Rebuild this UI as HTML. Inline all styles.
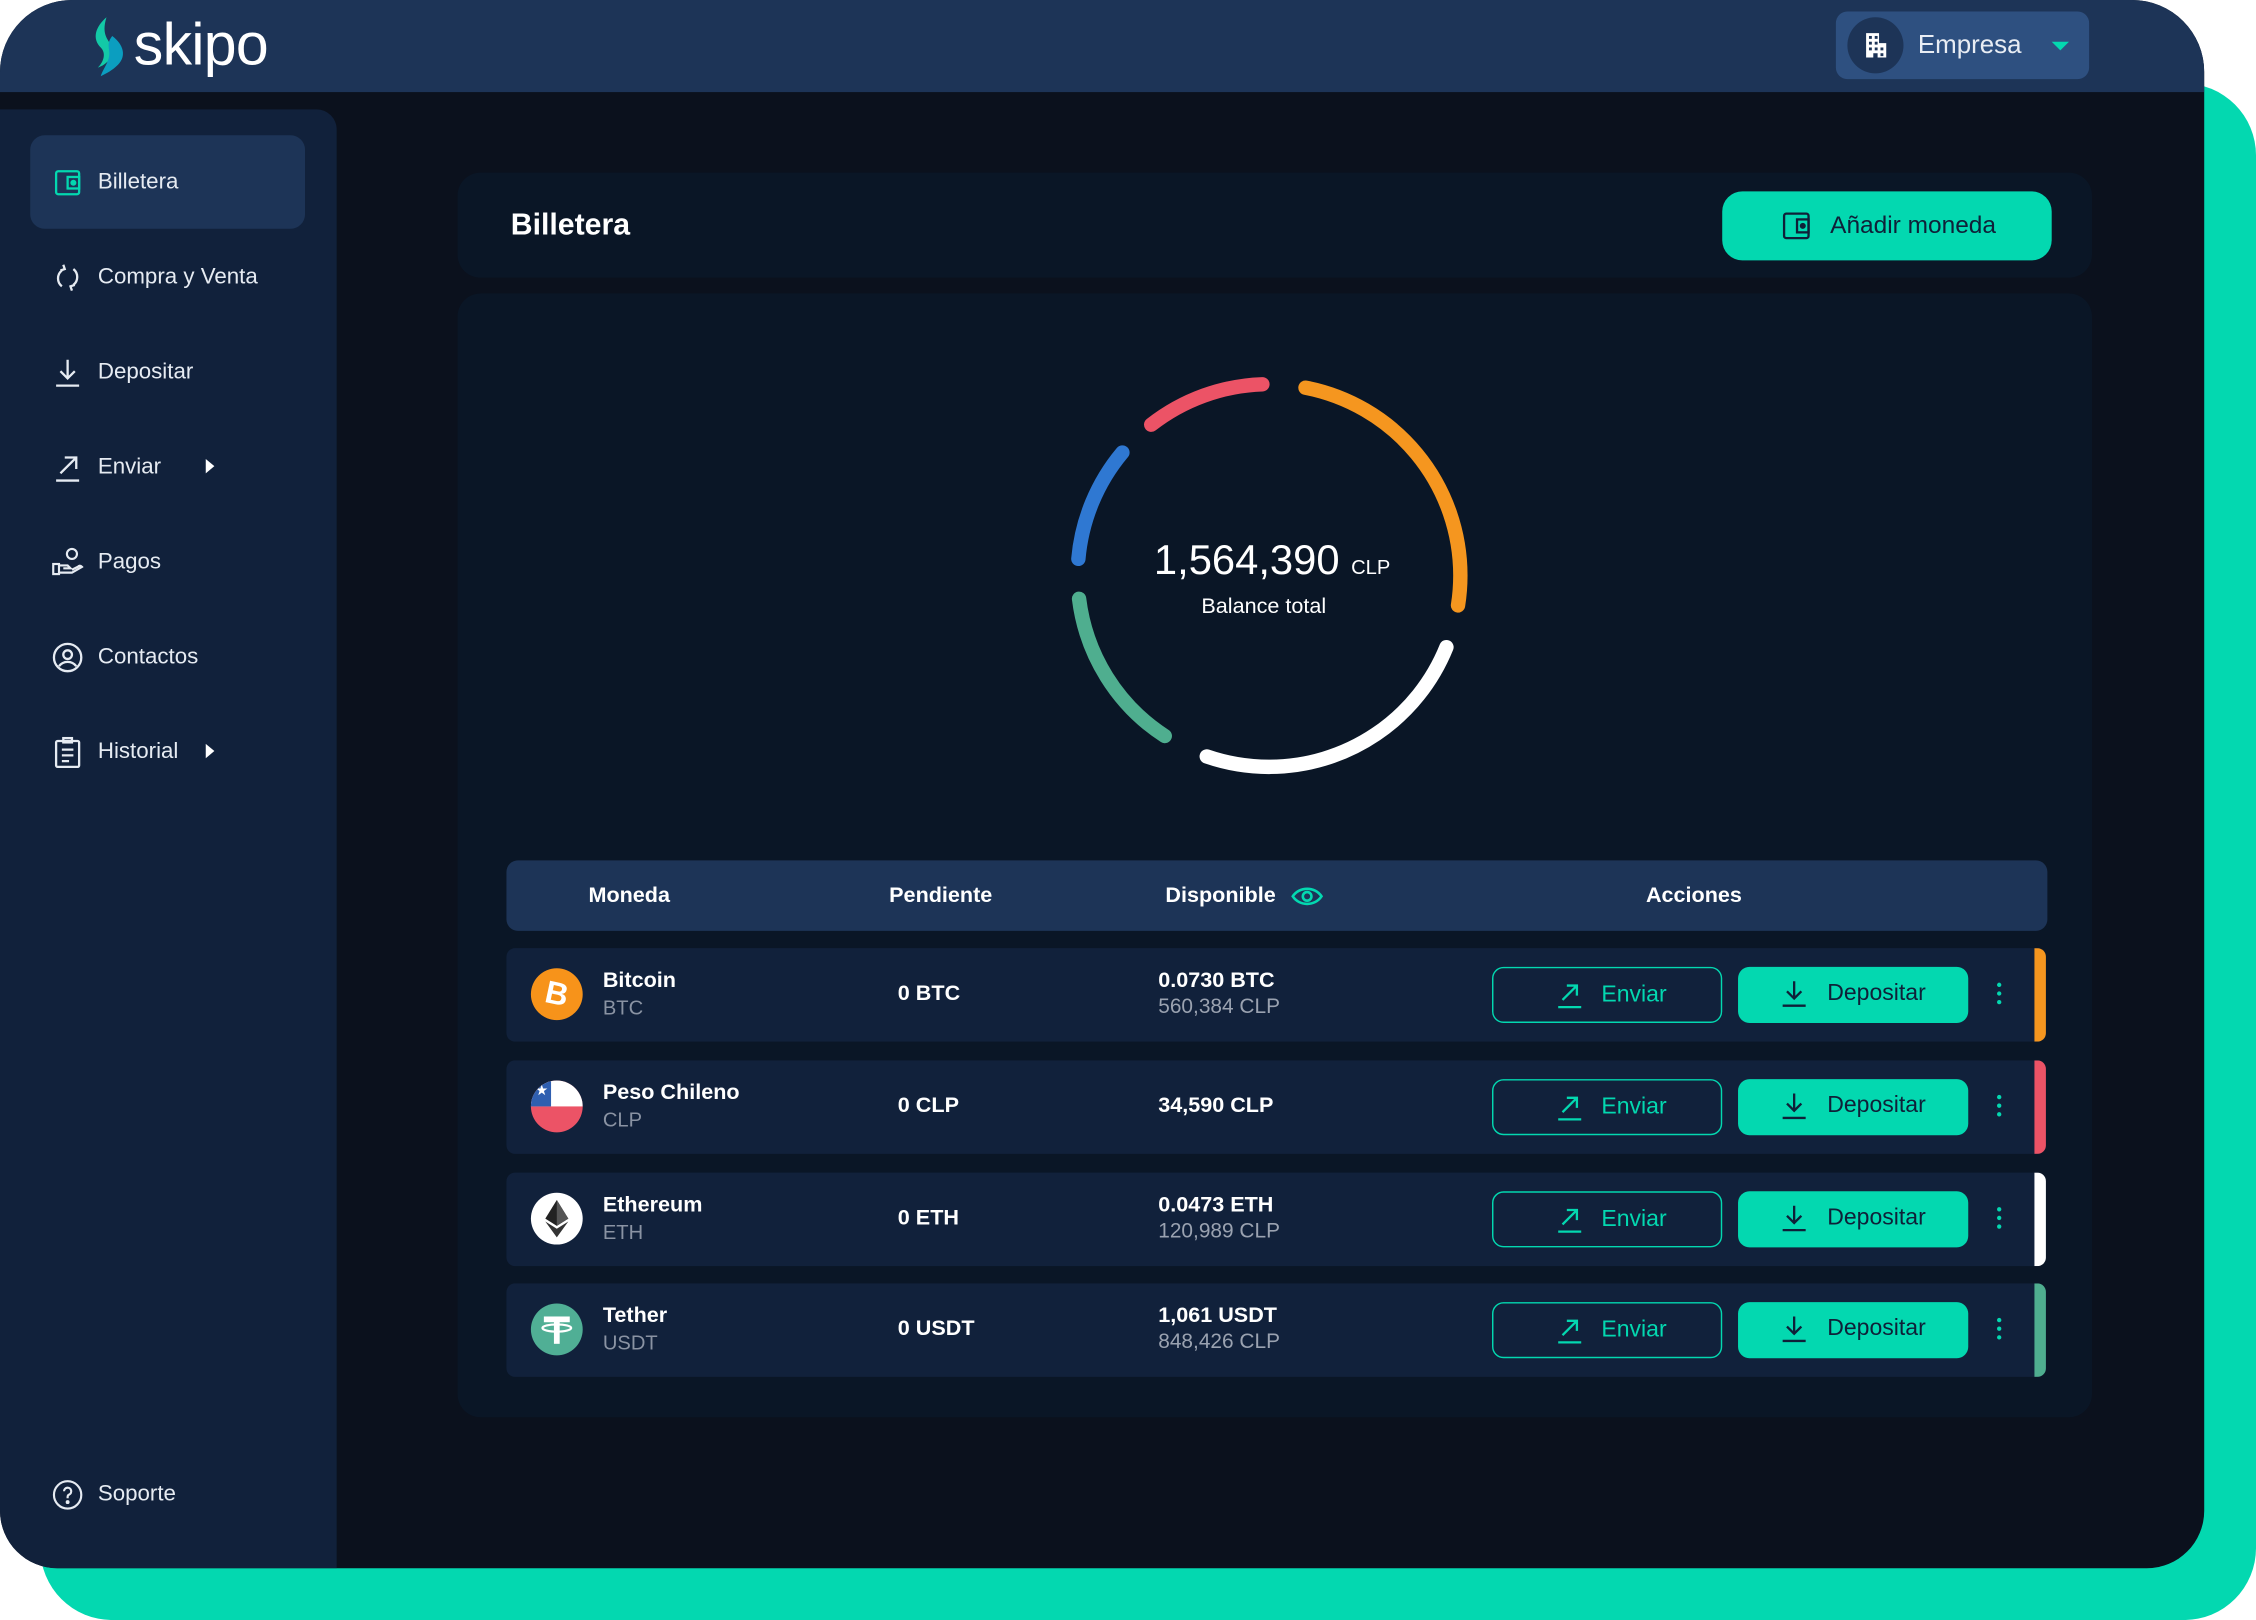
<!DOCTYPE html>
<html><head><meta charset="utf-8">
<style>
*{margin:0;padding:0;box-sizing:border-box}
html,body{width:2256px;height:1620px;overflow:hidden;background:#fff;font-family:"Liberation Sans",sans-serif}
#s{position:absolute;left:0;top:0;width:1568px;height:1126px;transform:scale(1.43878);transform-origin:0 0}
.a{position:absolute}
.green{left:28px;top:58px;width:1540px;height:1068px;background:#03d8b0;border-radius:50px}
.win{left:0;top:0;width:1532px;height:1090px;background:#0b111d;border-radius:50px 50px 40px 40px;overflow:hidden}
.hdr{left:0;top:0;width:1532px;height:64px;background:#1d3457}
.side{left:0;top:76px;width:234px;height:1014px;background:#11213b;border-radius:0 14px 0 0}
.item{position:absolute;left:21px;width:191px;height:65px;border-radius:10px;color:#e6ebf2;font-size:15.5px;display:flex;align-items:center}
.item svg{position:absolute;left:15px;top:50%;margin-top:-11px}
.item span{position:absolute;left:47px}
.card{background:#0a1626;border-radius:16px}
.th{position:absolute;top:598px;height:49px;color:#fff;font-weight:bold;font-size:15px;line-height:49px}
.row{position:absolute;left:352px;width:1070px;height:65px;background:#11213b;border-radius:6px;overflow:hidden}
.bar{position:absolute;right:0;top:0;width:8px;height:65px}
.name{position:absolute;left:67px;top:14px;color:#fff;font-weight:bold;font-size:15px}
.sub{position:absolute;left:67px;top:33px;color:#8a93a3;font-size:14px}
.pend{position:absolute;left:272px;top:23px;color:#fff;font-weight:bold;font-size:15px}
.d1{position:absolute;left:453px;color:#fff;font-weight:bold;font-size:15px}
.d2{position:absolute;left:453px;top:33px;color:#9aa2b0;font-size:14.5px}
.btn1{position:absolute;left:685px;top:13px;width:160px;height:39px;border:1.5px solid #03d8b0;border-radius:8px;color:#03d8b0;font-size:16px}
.btn2{position:absolute;left:856px;top:13px;width:160px;height:39px;background:#03d8b0;border-radius:8px;color:#0f2038;font-size:16px}
.btn1 span,.btn2 span{position:absolute;top:10px}
.btn1 svg,.btn2 svg{position:absolute;top:9px}
.dots{position:absolute;left:1036px;top:24px;width:4px}
.dots i{display:block;width:3px;height:3px;border-radius:2px;background:#03d8b0;margin-bottom:3px}
.ic{position:absolute;left:17px;top:14px;width:36px;height:36px;border-radius:50%;overflow:hidden}
</style></head><body>
<div id="s">
<div class="a green"></div>
<div class="a win">
 <div class="a hdr">
  <svg class="a" style="left:64px;top:11px" width="26" height="44" viewBox="0 0 26 44"><path d="M10 1 C2 8 0 16 6 22 C10 26 8 32 4 36 C10 34 16 28 14 22 C12 17 6 14 10 1Z" fill="#13c9a7"/><path d="M14 14 C22 20 24 28 18 34 C14 38 10 40 6 42 C8 36 12 32 12 26 C12 22 10 19 14 14Z" fill="#0b9ec0"/></svg>
  <div class="a" style="left:93px;top:8px;color:#fff;font-size:41px;letter-spacing:-0.5px">skipo</div>
  <div class="a" style="left:1276px;top:8px;width:176px;height:47px;background:#2e5080;border-radius:8px">
   <div class="a" style="left:8px;top:4px;width:39px;height:39px;border-radius:50%;background:#1d3457"></div>
   <svg class="a" style="left:18px;top:13px" width="20" height="20" viewBox="0 0 20 20" fill="#fff"><path d="M3 2h9v7h5v10H3z"/><g fill="#1d3457"><rect x="5" y="4" width="2" height="2"/><rect x="9" y="4" width="2" height="2"/><rect x="5" y="8" width="2" height="2"/><rect x="9" y="8" width="2" height="2"/><rect x="5" y="12" width="2" height="2"/><rect x="9" y="12" width="2" height="2"/><rect x="13" y="12" width="2" height="2"/><rect x="8" y="16" width="3" height="3"/><rect x="13" y="16" width="2" height="2"/></g></svg>
   <div class="a" style="left:57px;top:13px;color:#e8edf4;font-size:18px">Empresa</div>
   <div class="a" style="left:150px;top:21px;width:0;height:0;border-left:6px solid transparent;border-right:6px solid transparent;border-top:6px solid #03d8b0"></div>
  </div>
 </div>
 <div class="a side">
  <div class="item" style="top:18px;background:#1d3457"><svg width="22" height="22" viewBox="0 0 22 22" fill="none" stroke="#03d8b0" stroke-width="1.6"><rect x="3" y="3" width="16" height="16" rx="1.5"/><rect x="11" y="7" width="8" height="8"/><circle cx="15" cy="11" r="1.3" fill="#03d8b0"/></svg><span>Billetera</span></div>
  <div class="item" style="top:84px"><svg width="22" height="22" viewBox="0 0 22 22" fill="none" stroke="#e6ebf2" stroke-width="1.6"><path d="M7 6a7 7 0 0 0 0 11"/><path d="M15 16a7 7 0 0 0 0-11"/><path d="M8 2l1 3-3 1"/><path d="M14 20l-1-3 3-1"/></svg><span>Compra y Venta</span></div>
  <div class="item" style="top:150px"><svg width="22" height="22" viewBox="0 0 22 22" fill="none" stroke="#e6ebf2" stroke-width="1.6"><path d="M11 2v13M6 10l5 5 5-5M3 20h16"/></svg><span>Depositar</span></div>
  <div class="item" style="top:216px"><svg width="22" height="22" viewBox="0 0 22 22" fill="none" stroke="#e6ebf2" stroke-width="1.6"><path d="M6 15L17 4M9 4h8v8M3 20h16"/></svg><span>Enviar</span><div class="a" style="left:122px;top:27px;border-top:5px solid transparent;border-bottom:5px solid transparent;border-left:6px solid #fff"></div></div>
  <div class="item" style="top:282px"><svg width="22" height="22" viewBox="0 0 22 22" fill="none" stroke="#e6ebf2" stroke-width="1.5"><circle cx="14" cy="5" r="3.5"/><rect x="1" y="12" width="4" height="7"/><path d="M5 13h6l2 2h-5M5 18h9l7-4c-1-1-2-1-3 0l-4 2"/></svg><span>Pagos</span></div>
  <div class="item" style="top:348px"><svg width="22" height="22" viewBox="0 0 22 22" fill="none" stroke="#e6ebf2" stroke-width="1.6"><circle cx="11" cy="11" r="9.5"/><circle cx="11" cy="9" r="3"/><path d="M5 17c3-4 9-4 12 0"/></svg><span>Contactos</span></div>
  <div class="item" style="top:414px"><svg width="22" height="22" viewBox="0 0 22 22" fill="none" stroke="#e6ebf2" stroke-width="1.6"><rect x="3" y="3" width="16" height="18" rx="1"/><rect x="8" y="1" width="6" height="3"/><path d="M7 9h8M7 13h8M7 17h5"/></svg><span>Historial</span><div class="a" style="left:122px;top:27px;border-top:5px solid transparent;border-bottom:5px solid transparent;border-left:6px solid #fff"></div></div>
  <div class="item" style="top:930px"><svg width="22" height="22" viewBox="0 0 22 22" fill="none" stroke="#e6ebf2" stroke-width="1.5"><circle cx="11" cy="11" r="9.5"/><path d="M8.5 8.5a2.5 2.5 0 1 1 3.5 2.3c-.7.3-1 1-1 1.7v.8"/><circle cx="11" cy="16" r=".6" fill="#e6ebf2"/></svg><span>Soporte</span></div>
 </div>
 <div class="a card" style="left:318px;top:120px;width:1136px;height:73px">
  <div class="a" style="left:37px;top:25px;color:#fff;font-weight:bold;font-size:21px">Billetera</div>
  <div class="a" style="left:879px;top:13px;width:229px;height:48px;background:#03d8b0;border-radius:14px">
   <svg class="a" style="left:41px;top:14px" width="22" height="20" viewBox="0 0 22 20" fill="none" stroke="#0f2038" stroke-width="1.6"><rect x="2" y="1.5" width="17" height="17" rx="1.5"/><rect x="11" y="5.5" width="8" height="9"/><circle cx="15" cy="10" r="1.3" fill="#0f2038"/></svg>
   <div class="a" style="left:75px;top:14px;color:#0f2038;font-size:17px">Añadir moneda</div>
  </div>
 </div>
 <div class="a card" style="left:318px;top:204px;width:1136px;height:781px"></div>
 <svg class="a" style="left:732px;top:250px" width="300" height="300" viewBox="0 0 300 300">
  <g transform="rotate(-90 150 150)" fill="none" stroke-width="10" stroke-linecap="round">
   <circle cx="150" cy="150" r="133" pathLength="360" stroke="#f5961f" stroke-dasharray="88 272" stroke-dashoffset="-11"/>
   <circle cx="150" cy="150" r="133" pathLength="360" stroke="#ffffff" stroke-dasharray="87 273" stroke-dashoffset="-112"/>
   <circle cx="150" cy="150" r="133" pathLength="360" stroke="#4fae8f" stroke-dasharray="50 310" stroke-dashoffset="-213"/>
   <circle cx="150" cy="150" r="133" pathLength="360" stroke="#2f78d2" stroke-dasharray="35 325" stroke-dashoffset="-275"/>
   <circle cx="150" cy="150" r="133" pathLength="360" stroke="#ec5366" stroke-dasharray="36 324" stroke-dashoffset="-322"/>
  </g>
 </svg>
 <div class="a" style="left:802px;top:374px;color:#fff;font-size:29px">1,564,390 <span style="font-size:14px">CLP</span></div>
 <div class="a" style="left:835px;top:413px;color:#fff;font-size:15px">Balance total</div>
 <div class="a" style="left:352px;top:598px;width:1071px;height:49px;background:#1d3457;border-radius:8px"></div>
 <div class="th" style="left:409px">Moneda</div>
 <div class="th" style="left:618px">Pendiente</div>
 <div class="th" style="left:810px">Disponible</div>
 <svg class="a" style="left:897px;top:615px" width="23" height="16" viewBox="0 0 23 16" fill="none" stroke="#03d8b0" stroke-width="1.8"><path d="M1.5 8C6 1 17 1 21.5 8 17 15 6 15 1.5 8z"/><circle cx="11.5" cy="8" r="3"/></svg>
 <div class="th" style="left:1144px">Acciones</div>

 <div class="row" style="top:659px"><div class="bar" style="background:#f5961f"></div>
  <div class="ic" style="background:#f7931a"><div class="a" style="left:10px;top:5px;color:#fff;font-weight:bold;font-size:22px;transform:rotate(12deg)">B</div></div>
  <div class="name">Bitcoin</div><div class="sub">BTC</div><div class="pend">0 BTC</div>
  <div class="d1" style="top:14px">0.0730 BTC</div><div class="d2">560,384 CLP</div>
  <div class="btn1"><svg style="left:44px" width="18" height="20" viewBox="0 0 18 20" fill="none" stroke="#03d8b0" stroke-width="1.6"><path d="M4 13L14 3M7 3h7v7M1 18h16"/></svg><span style="left:75px">Enviar</span></div>
  <div class="btn2"><svg style="left:30px" width="18" height="20" viewBox="0 0 18 20" fill="none" stroke="#0f2038" stroke-width="1.6"><path d="M9 1v12M4 8l5 5 5-5M1 18h16"/></svg><span style="left:62px">Depositar</span></div>
  <div class="dots"><i></i><i></i><i></i></div></div>

 <div class="row" style="top:737px"><div class="bar" style="background:#ec5366"></div>
  <div class="ic" style="background:#ec5366"><div class="a" style="left:0;top:0;width:36px;height:18px;background:#fff"></div><div class="a" style="left:0;top:0;width:14px;height:18px;background:#2f5fb0"></div><div class="a" style="left:3px;top:2px;color:#fff;font-size:10px">★</div></div>
  <div class="name">Peso Chileno</div><div class="sub">CLP</div><div class="pend">0 CLP</div>
  <div class="d1" style="top:23px">34,590 CLP</div>
  <div class="btn1"><svg style="left:44px" width="18" height="20" viewBox="0 0 18 20" fill="none" stroke="#03d8b0" stroke-width="1.6"><path d="M4 13L14 3M7 3h7v7M1 18h16"/></svg><span style="left:75px">Enviar</span></div>
  <div class="btn2"><svg style="left:30px" width="18" height="20" viewBox="0 0 18 20" fill="none" stroke="#0f2038" stroke-width="1.6"><path d="M9 1v12M4 8l5 5 5-5M1 18h16"/></svg><span style="left:62px">Depositar</span></div>
  <div class="dots"><i></i><i></i><i></i></div></div>

 <div class="row" style="top:815px"><div class="bar" style="background:#ffffff"></div>
  <div class="ic" style="background:#fff"><svg width="36" height="36" viewBox="0 0 36 36"><path d="M18 5l-8 13 8 5 8-5z" fill="#222"/><path d="M18 5v18l8-5z" fill="#555"/><path d="M10 20l8 11 8-11-8 5z" fill="#333"/></svg></div>
  <div class="name">Ethereum</div><div class="sub">ETH</div><div class="pend">0 ETH</div>
  <div class="d1" style="top:14px">0.0473 ETH</div><div class="d2">120,989 CLP</div>
  <div class="btn1"><svg style="left:44px" width="18" height="20" viewBox="0 0 18 20" fill="none" stroke="#03d8b0" stroke-width="1.6"><path d="M4 13L14 3M7 3h7v7M1 18h16"/></svg><span style="left:75px">Enviar</span></div>
  <div class="btn2"><svg style="left:30px" width="18" height="20" viewBox="0 0 18 20" fill="none" stroke="#0f2038" stroke-width="1.6"><path d="M9 1v12M4 8l5 5 5-5M1 18h16"/></svg><span style="left:62px">Depositar</span></div>
  <div class="dots"><i></i><i></i><i></i></div></div>

 <div class="row" style="top:892px"><div class="bar" style="background:#4fae8f"></div>
  <div class="ic" style="background:#50af95"><svg width="36" height="36" viewBox="0 0 36 36" fill="#fff"><rect x="9" y="9" width="18" height="4"/><rect x="16" y="9" width="4" height="19"/><ellipse cx="18" cy="17" rx="10" ry="2.5" fill="none" stroke="#fff" stroke-width="1.5"/></svg></div>
  <div class="name">Tether</div><div class="sub">USDT</div><div class="pend">0 USDT</div>
  <div class="d1" style="top:14px">1,061 USDT</div><div class="d2">848,426 CLP</div>
  <div class="btn1"><svg style="left:44px" width="18" height="20" viewBox="0 0 18 20" fill="none" stroke="#03d8b0" stroke-width="1.6"><path d="M4 13L14 3M7 3h7v7M1 18h16"/></svg><span style="left:75px">Enviar</span></div>
  <div class="btn2"><svg style="left:30px" width="18" height="20" viewBox="0 0 18 20" fill="none" stroke="#0f2038" stroke-width="1.6"><path d="M9 1v12M4 8l5 5 5-5M1 18h16"/></svg><span style="left:62px">Depositar</span></div>
  <div class="dots"><i></i><i></i><i></i></div></div>
</div>
</div>
</body></html>
